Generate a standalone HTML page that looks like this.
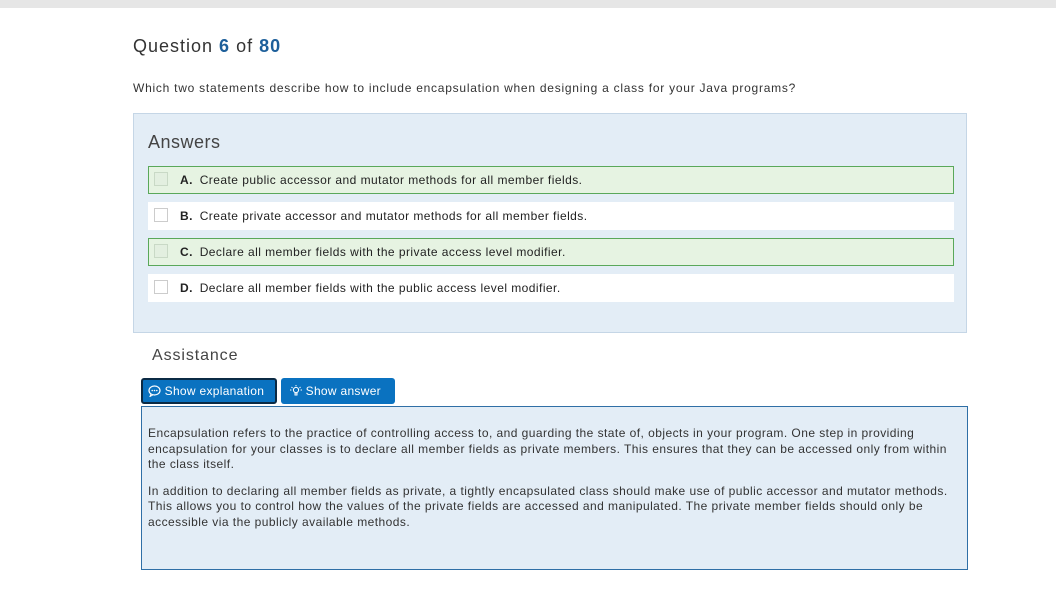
<!DOCTYPE html>
<html><head><style>
body{margin:0;width:1056px;height:612px;background:#fff;font-family:"Liberation Sans",sans-serif;position:relative;overflow:hidden;color:#222}
.top{position:absolute;left:0;top:0;width:1056px;height:8px;background:#e6e6e6}
.a{position:absolute}
h1{position:absolute;left:133px;top:36px;margin:0;font-size:18px;letter-spacing:1px;font-weight:normal;color:#333}
h1 b{color:#1d5f9a}
.q{left:133px;top:81px;font-size:12px;letter-spacing:.75px;color:#333}
.box{left:133px;top:113px;width:834px;height:220px;background:#e3edf6;border:1px solid #c5d6e6;box-sizing:border-box}
.ans{left:148px;top:132px;font-size:18px;letter-spacing:.5px;color:#444}
.row{position:absolute;left:148px;width:806px;height:28px;background:#fff;box-sizing:border-box;font-size:12px;letter-spacing:.45px;line-height:28px;color:#222}
.row.g{background:#e6f3e2;border:1px solid #5aa85a;line-height:26px}
.cb{position:absolute;left:6px;top:6px;width:14px;height:14px;border:1px solid #ccc;box-sizing:border-box;background:#fff}
.g .cb{top:5px;left:5px;background:#e3efe0;border-color:#c9d9c6}
.row span{position:absolute;left:32px}
.g span{left:31px}
.row b{font-size:12px;margin-right:3px}
.as{left:152px;top:347px;font-size:16px;letter-spacing:.9px;color:#444}
.btn{position:absolute;top:378px;height:26px;background:#0a72c0;color:#fff;font-size:12px;letter-spacing:.3px;line-height:26px;border-radius:3px;box-sizing:border-box}
.ex{left:141px;top:406px;width:827px;height:164px;background:#e3edf6;border:1px solid #2f6fa6;box-sizing:border-box;font-size:12px;letter-spacing:.45px;line-height:15.5px;color:#333;padding:19px 8px 0 6px;white-space:nowrap}
.ex p{margin:0 0 11px}
</style></head><body>
<div class="top"></div>
<h1>Question <b>6</b> of <b>80</b></h1>
<div class="a q">Which two statements describe how to include encapsulation when designing a class for your Java programs?</div>
<div class="a box"></div>
<div class="a ans">Answers</div>
<div class="row g" style="top:166px"><div class="cb"></div><span><b>A.</b> Create public accessor and mutator methods for all member fields.</span></div>
<div class="row" style="top:202px"><div class="cb"></div><span><b>B.</b> Create private accessor and mutator methods for all member fields.</span></div>
<div class="row g" style="top:238px"><div class="cb"></div><span><b>C.</b> Declare all member fields with the private access level modifier.</span></div>
<div class="row" style="top:274px"><div class="cb"></div><span><b>D.</b> Declare all member fields with the public access level modifier.</span></div>
<div class="a as">Assistance</div>
<div class="btn" style="left:141px;width:136px;border:2px solid #0b2a44;line-height:22px;padding-left:5px">
<svg width="13" height="12" viewBox="0 0 13 12" style="vertical-align:-2px"><ellipse cx="6.5" cy="5.5" rx="5.5" ry="4.5" fill="none" stroke="#fff" stroke-width="1.2"/><path d="M3 9 L2 11.5 L5 9.8" fill="none" stroke="#fff" stroke-width="1"/><circle cx="4.2" cy="5.5" r=".8" fill="#fff"/><circle cx="6.5" cy="5.5" r=".8" fill="#fff"/><circle cx="8.8" cy="5.5" r=".8" fill="#fff"/></svg> Show explanation</div>
<div class="btn" style="left:281px;width:114px;padding-left:9px">
<svg width="12" height="12" viewBox="0 0 12 12" style="vertical-align:-2px"><circle cx="6" cy="5" r="2.6" fill="none" stroke="#fff"/><path d="M5 8h2v2H5zM6 0v1.3M1.5 2l1 1M10.5 2l-1 1M0 5h1.4M10.6 5H12" stroke="#fff" fill="none"/></svg> Show answer</div>
<div class="a ex"><p>Encapsulation refers to the practice of controlling access to, and guarding the state of, objects in your program. One step in providing<br>encapsulation for your classes is to declare all member fields as private members. This ensures that they can be accessed only from within<br>the class itself.</p><p>In addition to declaring all member fields as private, a tightly encapsulated class should make use of public accessor and mutator methods.<br>This allows you to control how the values of the private fields are accessed and manipulated. The private member fields should only be<br>accessible via the publicly available methods.</p></div>
</body></html>
